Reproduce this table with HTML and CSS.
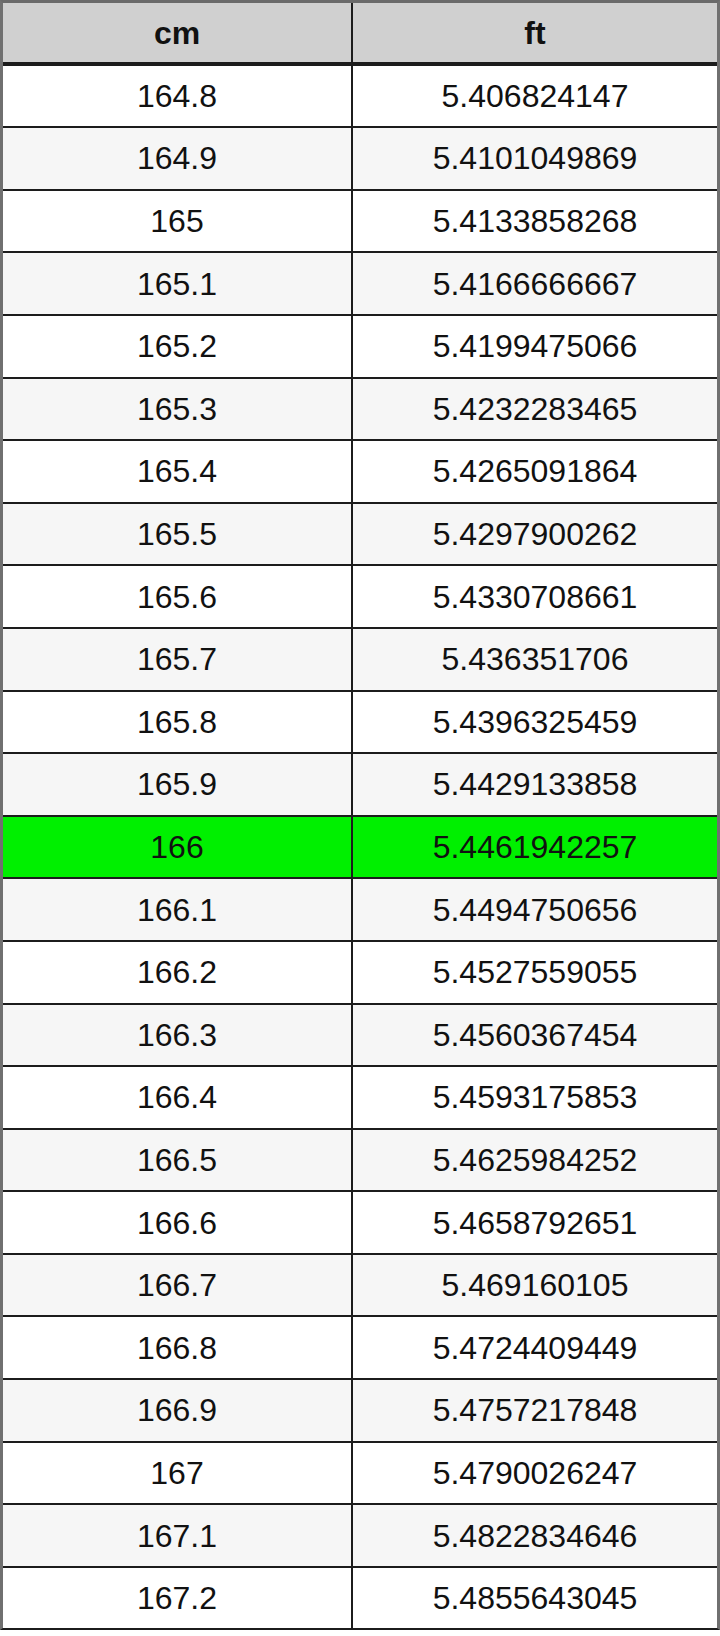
FILE: index.html
```html
<!DOCTYPE html>
<html>
<head>
<meta charset="utf-8">
<link rel="stylesheet" href="styles.css">
</head>
<body>
<div class="table">
  <div class="cell head">cm</div><div class="cell head">ft</div>
  <div class="cell">164.8</div><div class="cell">5.406824147</div>
  <div class="cell alt">164.9</div><div class="cell alt">5.4101049869</div>
  <div class="cell">165</div><div class="cell">5.4133858268</div>
  <div class="cell alt">165.1</div><div class="cell alt">5.4166666667</div>
  <div class="cell">165.2</div><div class="cell">5.4199475066</div>
  <div class="cell alt">165.3</div><div class="cell alt">5.4232283465</div>
  <div class="cell">165.4</div><div class="cell">5.4265091864</div>
  <div class="cell alt">165.5</div><div class="cell alt">5.4297900262</div>
  <div class="cell">165.6</div><div class="cell">5.4330708661</div>
  <div class="cell alt">165.7</div><div class="cell alt">5.436351706</div>
  <div class="cell">165.8</div><div class="cell">5.4396325459</div>
  <div class="cell alt">165.9</div><div class="cell alt">5.4429133858</div>
  <div class="cell hi">166</div><div class="cell hi">5.4461942257</div>
  <div class="cell alt">166.1</div><div class="cell alt">5.4494750656</div>
  <div class="cell">166.2</div><div class="cell">5.4527559055</div>
  <div class="cell alt">166.3</div><div class="cell alt">5.4560367454</div>
  <div class="cell">166.4</div><div class="cell">5.4593175853</div>
  <div class="cell alt">166.5</div><div class="cell alt">5.4625984252</div>
  <div class="cell">166.6</div><div class="cell">5.4658792651</div>
  <div class="cell alt">166.7</div><div class="cell alt">5.469160105</div>
  <div class="cell">166.8</div><div class="cell">5.4724409449</div>
  <div class="cell alt">166.9</div><div class="cell alt">5.4757217848</div>
  <div class="cell">167</div><div class="cell">5.4790026247</div>
  <div class="cell alt">167.1</div><div class="cell alt">5.4822834646</div>
  <div class="cell">167.2</div><div class="cell">5.4855643045</div>
</div>
</body>
</html>
```

FILE: styles.css
```css
html, body {
  margin: 0;
  padding: 0;
  background: #ffffff;
}

.table {
  width: 720px;
  box-sizing: border-box;
  display: grid;
  grid-template-columns: 348px 364px;
  grid-auto-rows: 60.6px;
  column-gap: 2px;
  row-gap: 2px;
  background: #1c1c1c;
  border-top: 3px solid #6a6a6a;
  border-left: 3px solid #707070;
  border-right: 3px solid #707070;
  border-bottom: 2px solid #1c1c1c;
  font-family: "Liberation Sans", Arial, sans-serif;
  font-size: 32px;
  color: #111111;
}

.cell {
  background: #ffffff;
  display: flex;
  align-items: center;
  justify-content: center;
  line-height: 1;
}

.cell.alt {
  background: #f6f6f6;
}

.cell.hi {
  background: #00f000;
}

.cell.head {
  background: #d0d0d0;
  font-weight: bold;
  height: 59px;
  align-self: start;
}
```
